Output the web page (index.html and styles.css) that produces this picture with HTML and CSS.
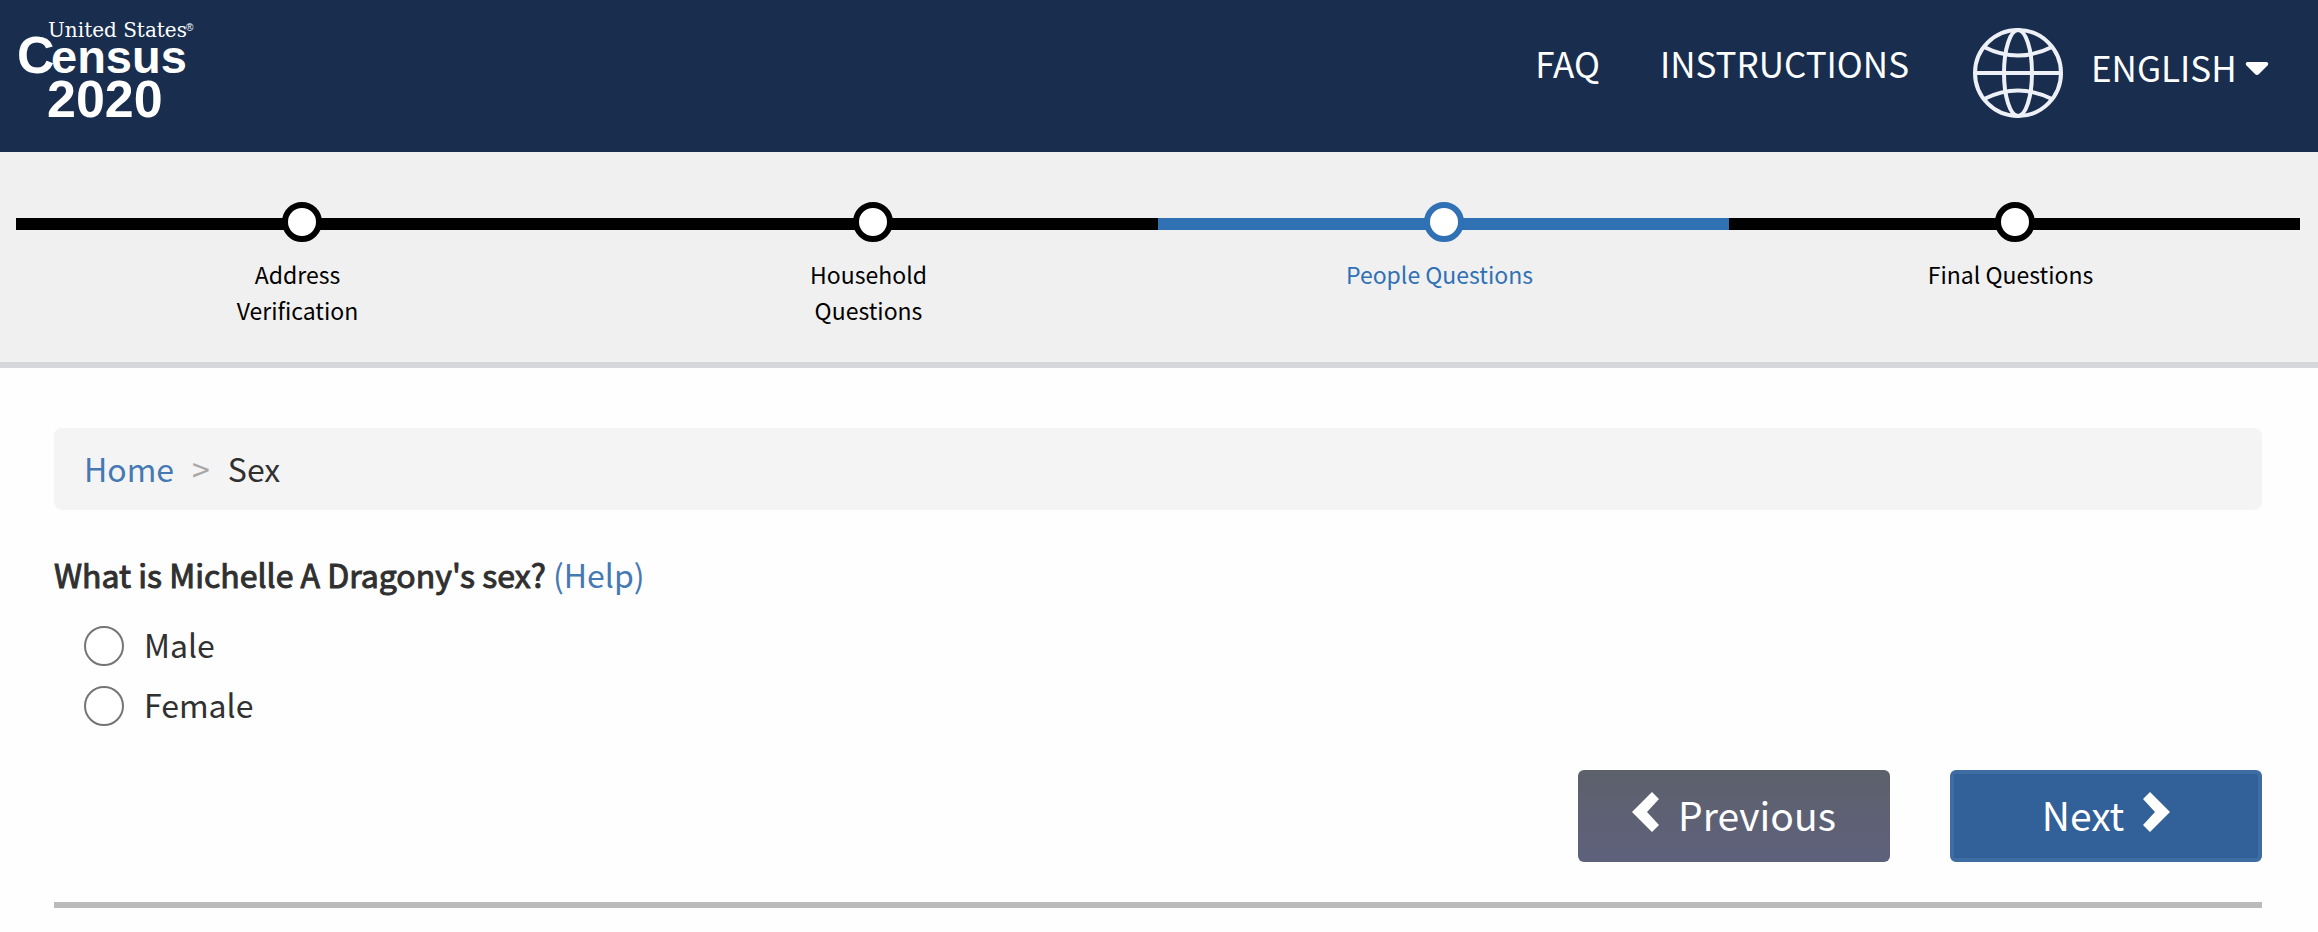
FILE: index.html
```html
<!DOCTYPE html>
<html lang="en">
<head>
  <meta charset="UTF-8">
  <meta name="viewport" content="width=device-width, initial-scale=1.0">
  <title>United States Census 2020</title>
  <link rel="stylesheet" href="styles.css">
</head>
<body>
  <header class="site-header">
    <a class="logo" href="#">
      <svg width="190" height="126" viewBox="0 0 190 126">
        <text class="logo-small" x="30" y="29">United States</text>
        <text class="logo-mark" x="168" y="23">®</text>
        <text class="logo-initial" x="-1" y="65">C</text>
        <text class="logo-word" x="33" y="65">ensus</text>
        <text class="logo-year" x="29" y="109">2020</text>
      </svg>
    </a>
    <nav class="site-nav">
      <a class="nav-link" href="#">FAQ</a>
      <a class="nav-link" href="#">INSTRUCTIONS</a>
      <div class="language">
        <svg class="globe" width="90" height="90" viewBox="0 0 90 90" aria-hidden="true">
          <circle cx="45" cy="45" r="43"/>
          <ellipse cx="45" cy="45" rx="14" ry="43"/>
          <path d="M2 45H88M11 19Q45 36 79 19M11 71Q45 54 79 71"/>
        </svg>
        <select class="language-select" aria-label="Language">
          <option>ENGLISH</option>
        </select>
        <svg class="caret" width="24" height="14" viewBox="0 0 24 14" aria-hidden="true">
          <path d="M2 0H22Q24 1 23 3L14 12Q12 14 10 12L1 3Q0 1 2 0Z"/>
        </svg>
      </div>
    </nav>
  </header>

  <ol class="steps">
    <li class="step">
      <span class="dot"></span>
      <span class="step-label">Address Verification</span>
    </li>
    <li class="step">
      <span class="dot"></span>
      <span class="step-label">Household Questions</span>
    </li>
    <li class="step active">
      <span class="dot"></span>
      <span class="step-label">People Questions</span>
    </li>
    <li class="step">
      <span class="dot"></span>
      <span class="step-label">Final Questions</span>
    </li>
  </ol>

  <main class="content">
    <nav class="breadcrumb">
      <a href="#">Home</a>
      <span class="separator">&gt;</span>
      <span>Sex</span>
    </nav>

    <form>
      <fieldset class="question">
        <legend><span class="question-text">What is Michelle A Dragony's sex?</span> <a href="#">(Help)</a></legend>
        <div class="option">
          <input type="radio" name="sex" id="male">
          <label for="male">Male</label>
        </div>
        <div class="option">
          <input type="radio" name="sex" id="female">
          <label for="female">Female</label>
        </div>
      </fieldset>

      <div class="buttons">
        <button type="button" class="btn previous-btn">
          <svg width="28" height="40" viewBox="0 0 28 40" aria-hidden="true"><path d="M20 0L27 7L15 20L27 33L20 40L0 20Z"/></svg>
          Previous
        </button>
        <button type="button" class="btn next-btn">
          Next
          <svg width="28" height="40" viewBox="0 0 28 40" aria-hidden="true"><path d="M8 0L1 7L13 20L1 33L8 40L28 20Z"/></svg>
        </button>
      </div>
    </form>
  </main>
</body>
</html>
```
FILE: styles.css
```css
* {
  box-sizing: border-box;
}

body {
  margin: 0;
  font-family: "Noto Sans CJK SC", "Noto Sans", sans-serif;
  font-size: 32px;
  line-height: 50px;
  color: #303030;
  background: #fefefe;
}

a {
  color: #4479b3;
  text-decoration: none;
}

.site-header {
  display: flex;
  justify-content: space-between;
  align-items: flex-start;
  height: 152px;
  padding: 8px 49px 0 18px;
  background: #192e4e;
}

.logo svg {
  display: block;
  fill: #fff;
  overflow: visible;
}

.logo-small {
  font: 20px "DejaVu Serif", serif;
}

.logo-mark {
  font: 10px "Liberation Sans", sans-serif;
}

.logo-initial {
  font: bold 52px "Liberation Sans", sans-serif;
}

.logo-word {
  font: bold 47px "Liberation Sans", sans-serif;
}

.logo-year {
  font: bold 52px "Liberation Sans", sans-serif;
}

.site-nav {
  display: flex;
  gap: 60px;
  padding-top: 20px;
  font-size: 35px;
  line-height: 70px;
}

.nav-link {
  color: #fff;
}

.language {
  display: flex;
  align-items: center;
  height: 90px;
  margin-left: 4px;
}

.globe {
  margin-right: 28px;
  fill: none;
  stroke: #eef0f8;
  stroke-width: 4;
}

.language-select {
  appearance: none;
  margin: 0 0 12px;
  padding: 0;
  border: none;
  font: inherit;
  color: #fff;
  background: transparent;
}

.caret {
  margin: 0 0 8px 8px;
  fill: #fff;
}

.steps {
  display: flex;
  height: 216px;
  margin: 0;
  padding: 50px 18px 0 16px;
  list-style: none;
  background: #f0f0f0;
  border-bottom: 6px solid #d6d7da;
}

.step {
  flex: 1;
  display: flex;
  flex-direction: column;
  align-items: center;
  color: #000;
  background: linear-gradient(currentColor, currentColor) 0 16px / 100% 12px no-repeat;
}

.step.active {
  color: #3070b5;
}

.dot {
  width: 40px;
  height: 40px;
  border: 6px solid currentColor;
  border-radius: 50%;
  background: #fff;
}

.step-label {
  width: 210px;
  margin-top: 14px;
  padding-right: 8px;
  font-size: 23px;
  line-height: 36px;
  text-align: center;
}

.content {
  margin: 60px 56px 0 54px;
  border-bottom: 6px solid #bababa;
}

.breadcrumb {
  display: flex;
  gap: 18px;
  padding: 15px 30px 17px;
  border-radius: 8px;
  background: #f4f4f4;
}

.separator {
  color: #a8a8a8;
}

.question {
  margin: 39px 0 0;
  padding: 0;
  border: none;
}

.question legend {
  padding: 0 0 17px;
}

/* a slightly heavier regular, lighter than the real bold */
.question-text {
  -webkit-text-stroke: 1px currentColor;
}

.option {
  display: flex;
  align-items: center;
  gap: 20px;
  height: 60px;
  padding-left: 30px;
}

.option input {
  appearance: none;
  width: 40px;
  height: 40px;
  margin: 0;
  border: 2px solid #757575;
  border-radius: 50%;
  background: #fff;
}

.option label {
  padding-bottom: 4px;
}

.buttons {
  display: flex;
  justify-content: flex-end;
  gap: 60px;
  padding: 34px 0 40px;
}

.btn {
  display: flex;
  justify-content: center;
  align-items: center;
  gap: 18px;
  width: 312px;
  height: 92px;
  padding: 0 6px 4px;
  border-radius: 6px;
  font-family: inherit;
  font-size: 39px;
  color: #fff;
  cursor: pointer;
}

.btn svg {
  margin-bottom: 4px;
  fill: #fff;
}

.previous-btn {
  border: none;
  background: linear-gradient(#5d616b, #5e617c);
}

.next-btn {
  border: 4px solid #3e6da3;
  background: #326099;
}
```
